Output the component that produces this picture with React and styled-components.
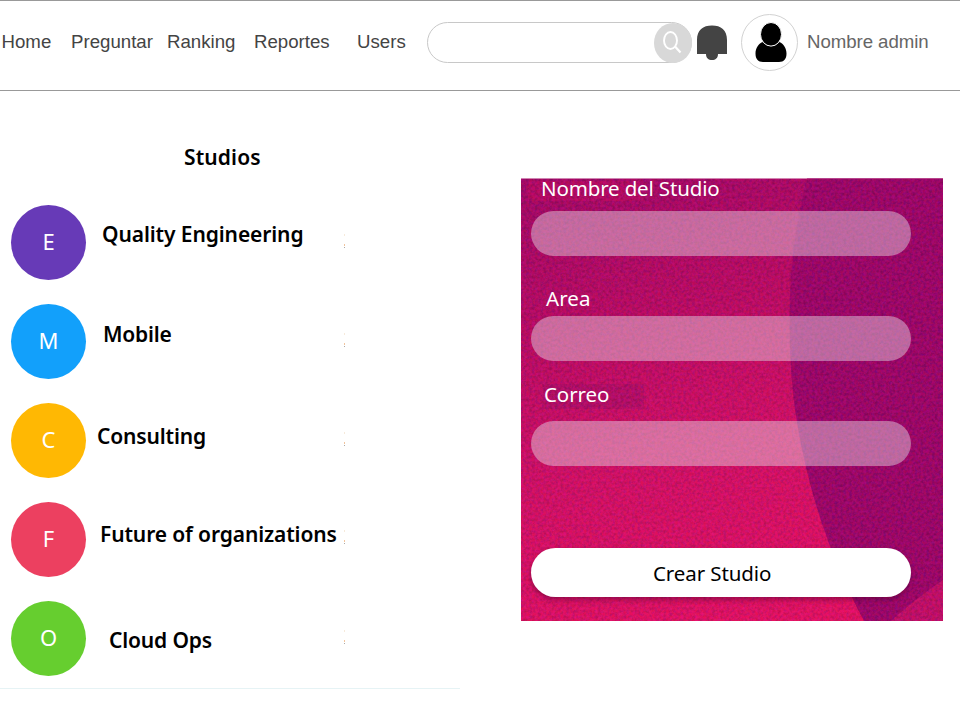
import React from "react";
import styled, { createGlobalStyle } from "styled-components";

const GlobalStyle = createGlobalStyle`
  * { box-sizing: border-box; }
  body { margin: 0; background: #fff; overflow: hidden; }
`;

const Page = styled.div`
  width: 960px;
  height: 720px;
  background: #fff;
  font-family: "Noto Sans", "Open Sans", sans-serif;
`;

const Header = styled.header`
  display: flex;
  align-items: flex-start;
  height: 91px;
  border-top: 1px solid #999;
  border-bottom: 1px solid #999;
  font-family: "Liberation Sans", Arial, sans-serif;
`;

const Nav = styled.nav`
  display: flex;
  width: 427px;
  padding-top: 30px;
`;

const NavLink = styled.a`
  flex: none;
  width: ${(p) => p.$width}px;
  padding-left: ${(p) => p.$inset || 0}px;
  color: #444;
  font-size: 18.67px;
  line-height: 22px;
  white-space: nowrap;
`;

const SearchBox = styled.div`
  display: flex;
  justify-content: flex-end;
  width: 265px;
  height: 41px;
  margin-top: 21px;
  border: 1px solid #c8c8c8;
  border-radius: 21px;
`;

const SearchButton = styled.span`
  width: 38px;
  height: 40px;
  margin: 0 -1px 0 0;
  border-radius: 50%;
  background: #d8d8d8;
`;

const BellIcon = styled.svg`
  flex: none;
  margin: 24px 0 0 5px;
`;

const Avatar = styled.span`
  flex: none;
  width: 57px;
  height: 57px;
  margin: 13px 0 0 14px;
  border: 1px solid #d2d2d2;
  border-radius: 50%;
`;

const AdminName = styled.span`
  margin: 30px 0 0 9px;
  color: #666;
  font-size: 18.67px;
  line-height: 22px;
  letter-spacing: -0.06px;
  white-space: nowrap;
`;

const Main = styled.main`
  display: flex;
  align-items: flex-start;
`;

const StudiosColumn = styled.section`
  width: 460px;
  height: 598px;
  padding-top: 51px;
  border-bottom: 1px solid #e6f3f5;
`;

const Title = styled.h2`
  margin: 0 0 33px;
  padding-left: 184px;
  font-size: 21px;
  line-height: 30px;
  font-weight: 600;
  letter-spacing: ${(p) => p.$spacing}px;
  color: #000;
`;

const StudioList = styled.div`
  display: flex;
  flex-direction: column;
  gap: 24px;
`;

const StudioRow = styled.div`
  display: grid;
  grid-template-columns: 75px 258px 2px;
  height: 75px;
  margin-left: 11px;
`;

const Initial = styled.span`
  display: flex;
  align-items: center;
  justify-content: center;
  height: 75px;
  padding-bottom: 3px;
  border-radius: 50%;
  background: ${(p) => p.$color};
  color: #fff;
  font-size: 22px;
  line-height: 30px;
`;

const StudioName = styled.span`
  padding: ${(p) => p.$top}px 0 0 ${(p) => p.$left}px;
  color: #000;
  font-size: 21px;
  line-height: 30px;
  font-weight: 600;
  letter-spacing: ${(p) => p.$spacing}px;
  white-space: nowrap;
`;

const DotsIcon = styled.svg`
  margin-top: ${(p) => p.$top}px;
`;

const FormCard = styled.form`
  position: relative;
  isolation: isolate;
  width: 422px;
  height: 443px;
  margin: 87px 0 0 61px;
  padding: 0 32px 0 10px;
`;

const CardArt = styled.svg`
  position: absolute;
  inset: 0;
  z-index: -1;
`;

const Label = styled.label`
  display: block;
  height: ${(p) => p.$height}px;
  padding: ${(p) => p.$top || 0}px 0 0 ${(p) => p.$left}px;
  color: #fff;
  font-size: 20.5px;
  line-height: ${(p) => p.$line || 28}px;
  letter-spacing: ${(p) => p.$spacing}px;
  white-space: nowrap;
`;

const Field = styled.div`
  height: 45px;
  border-radius: 23px;
  background: rgba(232, 222, 230, 0.45);
`;

const SubmitButton = styled.button`
  display: block;
  width: 380px;
  height: 49px;
  margin-top: 82px;
  padding: 1px 0 0 122px;
  border: 0;
  border-radius: 25px;
  background: #fff;
  box-shadow: 0 3px 5px rgba(60, 0, 40, 0.4);
  color: #000;
  font-family: inherit;
  font-size: 20.5px;
  line-height: 28px;
  letter-spacing: ${(p) => p.$spacing}px;
  text-align: left;
`;

const studios = [
  { initial: "E", name: "Quality Engineering", color: "#673ab7", left: 16, top: 14, spacing: -0.1, dots: 28 },
  { initial: "M", name: "Mobile", color: "#12a0fb", left: 17, top: 15, spacing: -0.2, dots: 28 },
  { initial: "C", name: "Consulting", color: "#ffb803", left: 11, top: 18, spacing: -0.15, dots: 28 },
  { initial: "F", name: "Future of organizations", color: "#ec4060", left: 14, top: 17, spacing: -0.12, dots: 27 },
  { initial: "O", name: "Cloud Ops", color: "#66ce2f", left: 23, top: 24, spacing: -0.15, dots: 28 },
];

function Background() {
  return (
    <CardArt width="422" height="443" viewBox="0 -1 422 443">
      <defs>
        <linearGradient id="base" x1="0.3" y1="0" x2="0.55" y2="1">
          <stop offset="0" stopColor="#a20865" />
          <stop offset="0.28" stopColor="#b80b63" />
          <stop offset="0.6" stopColor="#d21065" />
          <stop offset="1" stopColor="#e41162" />
        </linearGradient>
        <filter id="grain" x="0" y="0" width="100%" height="100%" colorInterpolationFilters="sRGB">
          <feTurbulence type="fractalNoise" baseFrequency="0.35" numOctaves="3" seed="4" />
          <feColorMatrix values="2.4 0 0 0 -0.55  0 0.5 0 0 -0.15  0 0 1.6 0 -0.4  0 0 0 0 1" />
        </filter>
      </defs>
      <rect y="-0.5" width="422" height="443" fill="url(#base)" />
      <rect x="7" y="2" width="112" height="20" fill="#d80c5c" opacity="0.3" />
      <rect x="22" y="205" width="101" height="25" fill="#900b67" opacity="0.35" />
      <path d="M286 -0.500C266 75 266 150 272 215C281 294 307 376 343 442H422V-0.500Z" fill="#980567" />
      <path d="M370 442Q394 420 422 401V442Z" fill="#c00e66" />
      <rect y="0" width="422" height="442" filter="url(#grain)" opacity="0.14" />
    </CardArt>
  );
}

export default function App() {
  return (
    <Page>
      <GlobalStyle />
      <Header>
        <Nav>
          <NavLink $width={71} $inset={1.5}>Home</NavLink>
          <NavLink $width={96}>Preguntar</NavLink>
          <NavLink $width={87}>Ranking</NavLink>
          <NavLink $width={103}>Reportes</NavLink>
          <NavLink $width={70}>Users</NavLink>
        </Nav>
        <SearchBox>
          <SearchButton>
            <svg width="38" height="39" viewBox="0 0 38 39" fill="none" stroke="#fff" strokeWidth="1.9">
              <ellipse cx="16.5" cy="17.5" rx="6.5" ry="8.5" />
              <path d="M21 23.500L26.500 29.500" strokeWidth="2.2" />
            </svg>
          </SearchButton>
        </SearchBox>
        <BellIcon width="30" height="36" viewBox="0 0 30 36" fill="#444">
          <path d="M0 29V15C0 5 6 0.5 15 0.5S30 5 30 15V29H21C21 33 18.5 35 15 35S9 33 9 29Z" />
        </BellIcon>
        <Avatar>
          <svg width="55" height="55" viewBox="0 0 55 55">
            <path d="M20.500 27C16.500 29 13.500 33 13.500 38.500C13.500 44 16 47 21 47H37C42 47 44.500 44 44.500 38.500C44.500 33 41.500 29 37.500 27Q29 35 20.500 27Z" fill="#000" />
            <ellipse cx="29" cy="19.300" rx="10.500" ry="11.800" fill="#000" stroke="#fff" strokeWidth="1" />
          </svg>
        </Avatar>
        <AdminName>Nombre admin</AdminName>
      </Header>
      <Main>
        <StudiosColumn>
          <Title $spacing={0.12}>Studios</Title>
          <StudioList>
            {studios.map((s) => (
              <StudioRow key={s.name}>
                <Initial $color={s.color}>{s.initial}</Initial>
                <StudioName $top={s.top} $left={s.left} $spacing={s.spacing}>{s.name}</StudioName>
                <DotsIcon $top={s.dots} width="2" height="18" viewBox="0 0 2 18">
                  <rect y="1" width="1" height="2" fill="#f6eadb" />
                  <rect y="11" width="1" height="2" fill="#f1c49d" />
                  <rect y="14" width="1" height="1" fill="#aaa" />
                </DotsIcon>
              </StudioRow>
            ))}
          </StudioList>
        </StudiosColumn>
        <FormCard>
          <Background />
          <Label $height={33} $left={10} $line={21} $spacing={-0.15}>Nombre del Studio</Label>
          <Field />
          <Label $height={60} $left={15} $top={28} $spacing={0.1}>Area</Label>
          <Field />
          <Label $height={60} $left={13} $top={19} $spacing={-0.1}>Correo</Label>
          <Field />
          <SubmitButton type="button" $spacing={-0.1}>Crear Studio</SubmitButton>
        </FormCard>
      </Main>
    </Page>
  );
}
